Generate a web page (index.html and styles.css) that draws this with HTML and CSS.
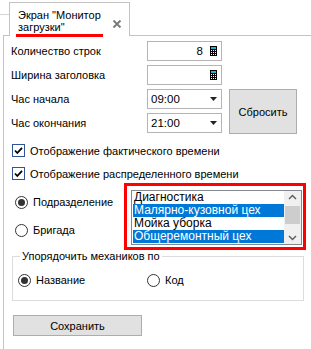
FILE: index.html
```html
<!DOCTYPE html>
<html lang="ru">
<head>
<meta charset="utf-8">
<link rel="stylesheet" href="styles.css">
</head>
<body>
<div class="tabs">
  <div class="tab-prev"></div>
  <div class="tab">
    <span class="tab-title">Экран "Монитор<br>загрузки"</span>
    <svg class="close" width="10" height="8" viewBox="0 0 10 8"><path d="M1.5 0.5 L8.5 7.5 M8.5 0.5 L1.5 7.5" stroke="#7b7b7b" stroke-width="2"/></svg>
  </div>
</div>
<div class="panel">
  <div class="form">
    <span class="lbl">Количество строк</span>
    <div class="field num"><span class="val">8</span>
      <svg class="calc" width="7" height="10" viewBox="0 0 7 10"><rect width="7" height="10" fill="#000"/><rect x="1" y="1" width="5" height="2" fill="#19b5e6"/><rect x="1" y="4" width="1" height="1" fill="#fff"/><rect x="3" y="4" width="1" height="1" fill="#fff"/><rect x="5" y="4" width="1" height="1" fill="#fff"/><rect x="1" y="6" width="1" height="1" fill="#fff"/><rect x="3" y="6" width="1" height="1" fill="#fff"/><rect x="5" y="6" width="1" height="1" fill="#fff"/><rect x="1" y="8" width="1" height="1" fill="#fff"/><rect x="3" y="8" width="1" height="1" fill="#fff"/><rect x="5" y="8" width="1" height="1" fill="#fff"/></svg>
    </div>
    <span class="spacer"></span>
    <span class="lbl">Ширина заголовка</span>
    <div class="field num"><span class="val"></span>
      <svg class="calc" width="7" height="10" viewBox="0 0 7 10"><rect width="7" height="10" fill="#000"/><rect x="1" y="1" width="5" height="2" fill="#19b5e6"/><rect x="1" y="4" width="1" height="1" fill="#fff"/><rect x="3" y="4" width="1" height="1" fill="#fff"/><rect x="5" y="4" width="1" height="1" fill="#fff"/><rect x="1" y="6" width="1" height="1" fill="#fff"/><rect x="3" y="6" width="1" height="1" fill="#fff"/><rect x="5" y="6" width="1" height="1" fill="#fff"/><rect x="1" y="8" width="1" height="1" fill="#fff"/><rect x="3" y="8" width="1" height="1" fill="#fff"/><rect x="5" y="8" width="1" height="1" fill="#fff"/></svg>
    </div>
    <span class="spacer"></span>
    <span class="lbl">Час начала</span>
    <div class="field combo"><span class="val">09:00</span>
      <svg class="arrow" width="7" height="4" viewBox="0 0 7 4"><path d="M0 0 H7 L3.5 4 Z" fill="#222"/></svg>
    </div>
    <button class="btn reset">Сбросить</button>
    <span class="lbl">Час окончания</span>
    <div class="field combo"><span class="val">21:00</span>
      <svg class="arrow" width="7" height="4" viewBox="0 0 7 4"><path d="M0 0 H7 L3.5 4 Z" fill="#222"/></svg>
    </div>
  </div>

  <div class="checks">
    <div class="check-row">
      <span class="cb"><svg width="11" height="11" viewBox="0 0 11 11"><path d="M2 5.5 L4.3 8 L9 2.8" fill="none" stroke="#000" stroke-width="1.8"/></svg></span>
      <span>Отображение фактического времени</span>
    </div>
    <div class="check-row">
      <span class="cb"><svg width="11" height="11" viewBox="0 0 11 11"><path d="M2 5.5 L4.3 8 L9 2.8" fill="none" stroke="#000" stroke-width="1.8"/></svg></span>
      <span>Отображение распределенного времени</span>
    </div>
  </div>

  <div class="section">
    <div class="radios">
      <div class="radio-row"><span class="rb on"></span><span>Подразделение</span></div>
      <div class="radio-row"><span class="rb"></span><span>Бригада</span></div>
    </div>
    <div class="redframe">
      <div class="list">
        <div class="items">
          <div class="item">Диагностика</div>
          <div class="item sel">Малярно-кузовной цех</div>
          <div class="item">Мойка уборка</div>
          <div class="item sel">Общеремонтный цех</div>
        </div>
        <div class="sbar">
          <svg class="chev" width="17" height="13" viewBox="0 0 17 13"><path d="M5 8 L8.5 4.5 L12 8" fill="none" stroke="#606060" stroke-width="1.5"/></svg>
          <div class="thumb"></div>
          <div class="track"></div>
          <svg class="chev" width="17" height="13" viewBox="0 0 17 13"><path d="M5 5 L8.5 8.5 L12 5" fill="none" stroke="#606060" stroke-width="1.5"/></svg>
        </div>
      </div>
    </div>
  </div>

  <fieldset class="group">
    <legend>Упорядочить механиков по</legend>
    <div class="group-row">
      <div class="radio-row w-name"><span class="rb on"></span><span>Название</span></div>
      <div class="radio-row"><span class="rb"></span><span>Код</span></div>
    </div>
  </fieldset>

  <button class="btn save">Сохранить</button>
</div>
</body>
</html>
```

FILE: styles.css
```css
* { box-sizing: border-box; }
html, body { margin: 0; padding: 0; background: #fff; }
body {
  width: 311px;
  height: 349px;
  overflow: hidden;
  font-family: "Liberation Sans", Arial, sans-serif;
  font-size: 11px;
  color: #000;
}

.tabs {
  display: flex;
  align-items: flex-end;
  height: 35px;
}
.tab-prev {
  width: 9px;
  height: 21px;
  border-top: 1px solid #d4d4d4;
  align-self: flex-end;
}
.tab {
  position: relative;
  z-index: 1;
  width: 121px;
  height: 34px;
  margin-bottom: -1px;
  border: 1px solid #c4c4c4;
  border-bottom: none;
  background: #fff;
  display: flex;
  align-items: flex-start;
  padding: 6px 0 0 6px;
}
.tab-title {
  display: inline-block;
  line-height: 12px;
  padding: 0 2px 1px 2px;
  border-bottom: 3px solid #f00;
  width: 87px;
}
.close {
  margin: 11px 0 0 9px;
}

.panel {
  margin-left: 3px;
  border-left: 1px solid #c4c4c4;
  border-top: 1px solid #c4c4c4;
  padding: 5px 0 0 7px;
  height: 320px;
}

.form {
  display: grid;
  grid-template-columns: 136px 75px 68px;
  grid-auto-rows: 20px;
  column-gap: 0;
  row-gap: 4px;
}
.form .btn.reset { margin-left: 7px; width: 68px; grid-row: 3 / span 2; grid-column: 3; height: 45px; }
.lbl { align-self: center; line-height: 13px; }
.spacer { display: block; }

.field {
  border: 1px solid #b4b4b4;
  display: flex;
  align-items: center;
  height: 20px;
}
.field.num { justify-content: flex-end; padding-right: 4px; }
.field.num .val { margin-right: 7px; font-size: 11.5px; }
.field.combo { justify-content: space-between; padding: 0 3px 0 3px; }
.field.combo .val { font-size: 11.5px; }
.calc { display: block; }
.arrow { display: block; margin-right: 1px; }

.btn {
  font-family: "Liberation Sans", Arial, sans-serif;
  font-size: 11px;
  color: #000;
  background: #e1e1e1;
  border: 1px solid #adadad;
  padding: 0;
  margin: 0;
}

.checks {
  display: flex;
  flex-direction: column;
  margin-top: 6px;
}
.check-row {
  display: flex;
  align-items: center;
  gap: 5px;
  height: 23px;
  font-size: 11px;
  padding-left: 1px;
}
.cb {
  width: 13px;
  height: 13px;
  border: 1px solid #2f5597;
  display: flex;
  align-items: center;
  justify-content: center;
  background: #fff;
}
.cb svg { display: block; }

.section {
  display: flex;
  margin-top: -2px;
}
.radios {
  width: 113px;
  display: flex;
  flex-direction: column;
  padding: 7px 0 0 4px;
  gap: 4px;
}
.radio-row {
  display: flex;
  align-items: center;
  gap: 5px;
  height: 24px;
  font-size: 11px;
}
.rb {
  width: 13px;
  height: 13px;
  border: 1px solid #333;
  border-radius: 50%;
  display: flex;
  align-items: center;
  justify-content: center;
}
.rb.on::after {
  content: "";
  width: 7px;
  height: 7px;
  border-radius: 50%;
  background: #333;
}

.redframe {
  width: 182px;
  height: 67px;
  border: 3px solid #f00;
  padding: 4px 0 0 4px;
}
.list {
  width: 171px;
  height: 55px;
  border: 1px solid #828790;
  display: flex;
  padding: 0 0 0 1px;
}
.items {
  flex: 1;
  font-size: 12px;
}
.item {
  height: 13px;
  line-height: 13px;
  padding-left: 1px;
  white-space: nowrap;
}
.item.sel { background: #0078d7; color: #fff; }
.sbar {
  width: 17px;
  background: #f0f0f0;
  display: flex;
  flex-direction: column;
}
.chev { display: block; flex: none; }
.thumb { height: 18px; background: #cdcdcd; margin: 2px 1px 0 1px; flex: none; }
.track { flex: 1; }

.group {
  margin: 0 0 0 1px;
  width: 292px;
  height: 51px;
  border: 1px solid #dcdcdc;
  padding: 5px 0 0 5px;
}
.group legend {
  padding: 0 2px;
  margin-left: 2px;
  font-size: 11px;
  line-height: 13px;
}
.group-row { display: flex; }
.w-name { width: 129px; }

.btn.save {
  display: block;
  margin: 14px 0 0 2px;
  width: 129px;
  height: 21px;
}
```
